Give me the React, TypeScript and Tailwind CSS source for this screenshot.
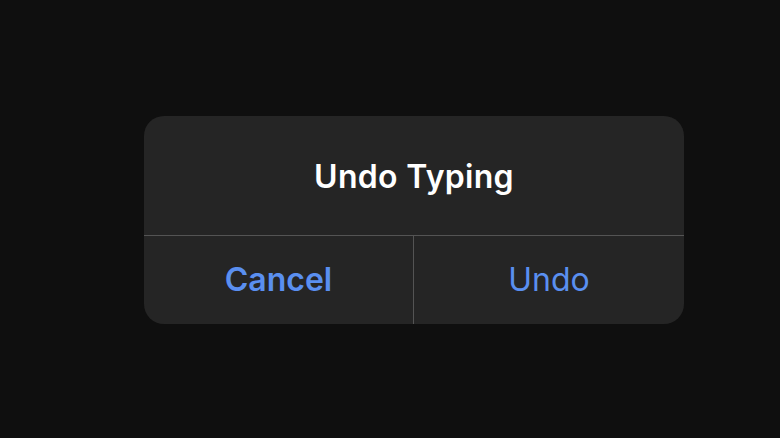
export default function App() {
  return (
    <div className="flex h-[438px] w-[780px] items-start justify-start bg-[#0f0f0f] pl-[144px] pt-[116px] font-['Inter',sans-serif]">
      <div className="flex w-[540px] flex-col overflow-hidden rounded-[20px] bg-[#252525]">
        <div className="flex h-[120px] items-center justify-center border-b border-[#545454] pt-[2px]">
          <span className="text-[32px] font-semibold tracking-[0.3px] text-white">Undo Typing</span>
        </div>
        <div className="grid h-[88px] grid-cols-2">
          <button className="flex items-center justify-center border-r border-[#545454] text-[32px] font-semibold text-[#5a8ff0]">
            Cancel
          </button>
          <button className="flex items-center justify-center text-[32px] font-normal text-[#5a8ff0]">
            Undo
          </button>
        </div>
      </div>
    </div>
  );
}
